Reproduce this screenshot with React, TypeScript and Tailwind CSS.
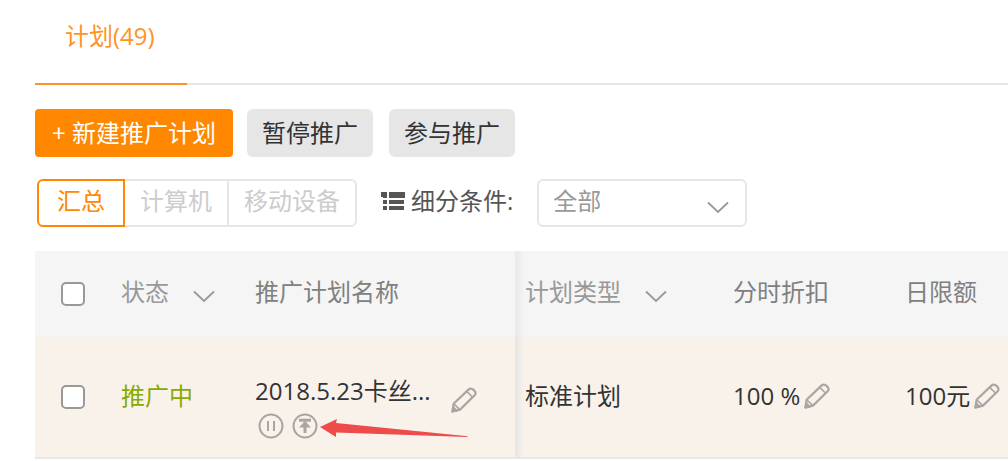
import React, { useState } from 'react';

interface IconProps {
  className?: string;
}

const ChevronIcon: React.FC<IconProps> = ({ className = "" }) => (
  <svg viewBox="0 0 22 14" className={`h-3.5 w-[22px] fill-none stroke-[#999] ${className}`} strokeWidth="1.8">
    <path d="M1 2.5 11 12 21 2.5" />
  </svg>
);

const PencilIcon: React.FC<IconProps> = ({ className = "" }) => (
  <svg viewBox="0 0 26 26" className={`h-[26px] w-[26px] shrink-0 fill-none stroke-[#a8a5a3] ${className}`} strokeWidth="2.2" strokeLinejoin="round">
    <path d="M1.5 24.5 2.6 16.8 17.4 2.6C19 1.2 21 1.4 22.6 2.9 24.7 4.8 25.2 6.6 23.6 8.2L9 22.6Z" />
    <path d="M16 4.6 21.4 10M3 17 8.6 22.4" strokeWidth="1.6" />
    <path d="M1.5 24.5 2.3 20.4 5.4 23.6Z" className="fill-[#a8a5a3]" />
  </svg>
);

const PauseIcon: React.FC = () => (
  <svg viewBox="0 0 26 26" className="h-[26px] w-[26px] fill-none stroke-[#a8a5a3]" strokeWidth="2">
    <circle cx="13" cy="13" r="11.5" />
    <path d="M10 8v10M16 8v10" />
  </svg>
);

const PinTopIcon: React.FC = () => (
  <svg viewBox="0 0 26 26" className="h-[26px] w-[26px] fill-none stroke-[#a8a5a3]" strokeWidth="2">
    <circle cx="13" cy="13" r="11.5" />
    <path d="M7 7.2h12" strokeWidth="3" />
    <path d="M13 9v11" strokeWidth="3" />
    <path d="M13 8 7 14.6h12Z" className="fill-[#a8a5a3] stroke-none" />
  </svg>
);

const ListIcon: React.FC = () => (
  <svg viewBox="0 0 24 18" className="h-[18px] w-6 fill-[#555]">
    <path d="M0 0h6v6H2V5H0zM8 0h16v6H8zM2 8h4v4H2zM8 8h15v4H8zM2 14h4v4H2zM8 14h15v4H8z" />
  </svg>
);

const checkboxClass =
  "block size-6 appearance-none rounded-[5px] border-2 border-[#999] bg-white checked:bg-[#ff8800]";

const devices = ['汇总', '计算机', '移动设备'];

export default function App() {
  const [device, setDevice] = useState('汇总');
  const [checked, setChecked] = useState(false);

  return (
    <div className="overflow-hidden bg-white pl-[35px] font-['Open_Sans','Noto_Sans_CJK_SC',sans-serif] text-2xl leading-9 text-[#333]">
      <nav className="flex border-b-2 border-[#e6e6e6] pt-[18px]">
        <a href="#plans" className="-mb-0.5 w-[152px] border-b-2 border-[#ff9326] pb-[29px] pl-[30px] text-[#ff9326]">
          计划(49)
        </a>
      </nav>

      <div className="mt-6 flex">
        <button className="h-12 w-[198px] rounded bg-[#ff8800] whitespace-nowrap text-white">+ 新建推广计划</button>
        <button className="ml-3.5 h-12 w-[126px] rounded-md bg-[#e6e6e6]">暂停推广</button>
        <button className="ml-4 h-12 w-[126px] rounded-md bg-[#e6e6e6]">参与推广</button>
      </div>

      <div className="mt-[22px] flex items-center pl-0.5">
        <div className="flex">
          {devices.map((name) => (
            <button
              key={name}
              onClick={() => setDevice(name)}
              className={`h-12 border-2 px-4 pb-1 not-first:-ml-0.5 first:rounded-l-md last:rounded-r-md last:px-[15px] nth-1:px-[18px] nth-2:px-[15px] ${
                device === name ? 'z-10 border-[#ff8800] text-[#ff8800]' : 'border-[#e6e6e6] text-[#ccc]'
              }`}
            >
              {name}
            </button>
          ))}
        </div>
        <label htmlFor="segment" className="ml-6 flex items-center gap-1.5 pb-1 whitespace-nowrap text-[#555]">
          <ListIcon />
          细分条件:
        </label>
        <div className="relative ml-6">
          <select id="segment" className="h-12 w-[210px] appearance-none rounded-md border-2 border-[#e6e6e6] bg-white pb-1 pl-3.5 text-[#999]">
            <option>全部</option>
          </select>
          <ChevronIcon className="pointer-events-none absolute top-[21px] right-[18px]" />
        </div>
      </div>

      <table className="mt-6 w-full table-fixed border-separate border-spacing-0 text-left whitespace-nowrap">
        <colgroup>
          <col className="w-[70px]" />
          <col className="w-[134px]" />
          <col className="w-[276px]" />
          <col className="w-[208px]" />
          <col className="w-[172px]" />
          <col />
        </colgroup>
        <thead>
          <tr className="h-[86px] bg-[#f5f5f5] text-[#808080] *:p-0 *:font-normal">
            <th>
              <input type="checkbox" aria-label="全选" className={`ml-[26px] ${checkboxClass}`} checked={checked} onChange={() => setChecked(!checked)} />
            </th>
            <th>
              <div className="flex items-center gap-6 pb-1 pl-4 text-[#999]">
                状态
                <ChevronIcon className="mt-2" />
              </div>
            </th>
            <th>
              <div className="pb-1 pl-4">推广计划名称</div>
            </th>
            <th className="bg-[linear-gradient(to_right,#e9e9e9,#ededed_4px,#f5f5f5_9px)]">
              <div className="flex items-center gap-6 pb-1 pl-2.5 text-[#999]">
                计划类型
                <ChevronIcon className="mt-2" />
              </div>
            </th>
            <th>
              <div className="pb-1 pl-2.5">分时折扣</div>
            </th>
            <th>
              <div className="pb-1 pl-2.5">日限额</div>
            </th>
          </tr>
        </thead>
        <tbody>
          <tr className="h-[122px] bg-[#f9f2eb] *:border-b-2 *:border-[#e8e8e8] *:p-0">
            <td>
              <input type="checkbox" aria-label="2018.5.23卡丝" className={`ml-[26px] ${checkboxClass}`} checked={checked} onChange={() => setChecked(!checked)} />
            </td>
            <td>
              <div className="pb-0.5 pl-4 text-[#88aa00]">推广中</div>
            </td>
            <td className="align-top">
              <div className="flex pt-9 pl-4">
                <div className="w-[196px]">
                  <div>2018.5.23卡丝...</div>
                  <div className="relative mt-1 flex gap-2 pl-[3px]">
                    <button aria-label="暂停">
                      <PauseIcon />
                    </button>
                    <button aria-label="置顶">
                      <PinTopIcon />
                    </button>
                    <svg viewBox="0 0 150 18" className="absolute top-1.5 left-16 h-[18px] w-[150px] fill-[#ee4b4b]">
                      <path d="M1 8 18 0 17 4 149 17.2 148 18 17 13.5 17 18Z" />
                    </svg>
                  </div>
                </div>
                <button aria-label="编辑名称" className="mt-3.5 h-[26px]">
                  <PencilIcon />
                </button>
              </div>
            </td>
            <td className="bg-[linear-gradient(to_right,#e8e6e4,#edeae6_4px,#f9f2eb_9px)]">
              <div className="pb-0.5 pl-2.5">标准计划</div>
            </td>
            <td>
              <div className="flex items-center gap-1 pb-0.5 pl-2.5">
                100 %
                <button aria-label="编辑折扣">
                  <PencilIcon />
                </button>
              </div>
            </td>
            <td>
              <div className="flex items-center gap-1 pb-0.5 pl-2.5">
                100元
                <button aria-label="编辑日限额">
                  <PencilIcon />
                </button>
              </div>
            </td>
          </tr>
        </tbody>
      </table>
    </div>
  );
}
